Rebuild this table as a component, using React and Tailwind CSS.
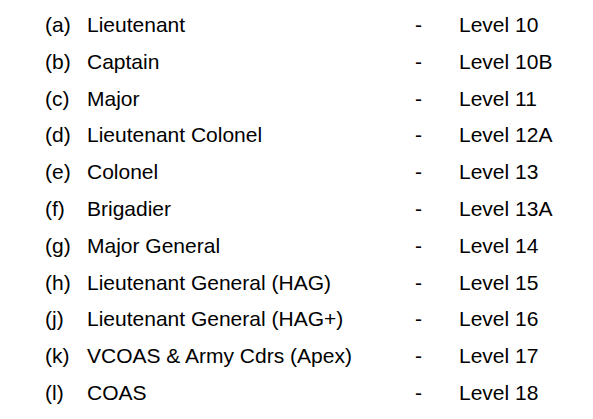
const RANKS = [
    { key: "(a)", rank: "Lieutenant", level: "Level 10" },
    { key: "(b)", rank: "Captain", level: "Level 10B" },
    { key: "(c)", rank: "Major", level: "Level 11" },
    { key: "(d)", rank: "Lieutenant Colonel", level: "Level 12A" },
    { key: "(e)", rank: "Colonel", level: "Level 13" },
    { key: "(f)", rank: "Brigadier", level: "Level 13A" },
    { key: "(g)", rank: "Major General", level: "Level 14" },
    { key: "(h)", rank: "Lieutenant General (HAG)", level: "Level 15" },
    { key: "(j)", rank: "Lieutenant General (HAG+)", level: "Level 16" },
    { key: "(k)", rank: "VCOAS & Army Cdrs (Apex)", level: "Level 17" },
    { key: "(l)", rank: "COAS", level: "Level 18" },
];

export default function App() {
    return (
        <div className="w-[593px] h-[419px] bg-white overflow-hidden pt-[7px] font-['Liberation_Sans',Arial,sans-serif] text-[21px] leading-[36.8px] text-black">
            {RANKS.map(({ key, rank, level }) => (
                <div key={key} className="flex">
                    <span className="w-[42px] ml-[45px]">{key}</span>
                    <span className="w-[328px]">{rank}</span>
                    <span className="w-[44px]">-</span>
                    <span>{level}</span>
                </div>
            ))}
        </div>
    );
}
